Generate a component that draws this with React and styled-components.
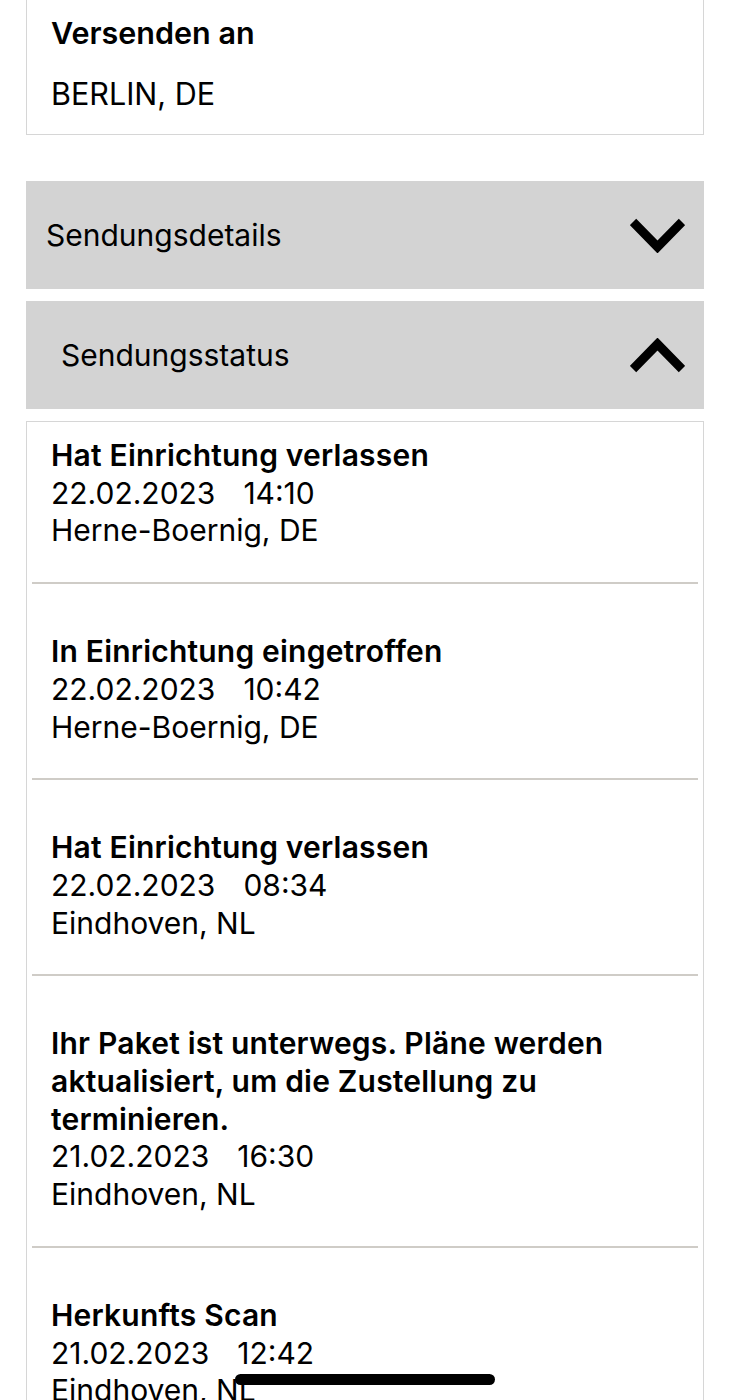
import styled, { createGlobalStyle } from "styled-components"

const GlobalStyle = createGlobalStyle`
  html, body {
    margin: 0;
    padding: 0;
    background: #ffffff;
  }
  body {
    font-family: Inter, "Noto Sans", "Liberation Sans", sans-serif;
    color: #000000;
    -webkit-font-smoothing: antialiased;
  }
`

const Page = styled.div`
  padding: 0 26px;
  display: flex;
  flex-direction: column;
  position: relative;
  min-height: 1400px;
  box-sizing: border-box;
  overflow: hidden;
`

const AddressCard = styled.div`
  margin-top: -10px;
  border: 1px solid #d6d6d6;
  border-top: none;
  padding: 0 24px 21px 24px;
`

const AddressTitle = styled.div`
  font-size: 30.5px;
  font-weight: 600;
  line-height: 38px;
  padding-top: 24px;
`

const AddressText = styled.div`
  font-size: 30.5px;
  line-height: 38px;
  margin-top: 23px;
`

const Header = styled.div`
  height: 108px;
  background: #d3d3d3;
  display: flex;
  align-items: center;
  justify-content: space-between;
  padding: 0 19px 0 ${(p) => p.$indent}px;
  margin-top: ${(p) => p.$gap}px;
  font-size: 30px;
  box-sizing: border-box;
`

const Chevron = styled.svg`
  width: 55px;
  height: 35px;
  display: block;
`

const StatusList = styled.div`
  margin-top: 12px;
  border: 1px solid #d6d6d6;
  border-bottom: none;
  padding: 0 5px;
`

const Event = styled.div`
  padding: ${(p) => (p.$first ? 15 : 49)}px 60px 32px 19px;
  border-bottom: 2px solid #cfccc7;
`

const EventTitle = styled.div`
  font-size: 30px;
  font-weight: 600;
  letter-spacing: 0.2px;
  line-height: 37.7px;
`

const EventLine = styled.div`
  font-size: 30px;
  line-height: 37.7px;
  display: flex;
  gap: 28px;
`

const HomeBar = styled.div`
  position: absolute;
  left: 235px;
  top: 1374px;
  width: 260px;
  height: 11px;
  border-radius: 6px;
  background: #000000;
`

const ChevronIcon = ({ up }) => (
  <Chevron viewBox="0 0 55 35">
    <polyline
      points={up ? "3,31 27.5,6 52,31" : "3,4 27.5,29 52,4"}
      fill="none"
      stroke="#000"
      strokeWidth="9"
      strokeLinejoin="miter"
    />
  </Chevron>
)

const events = [
  { title: "Hat Einrichtung verlassen", date: "22.02.2023", time: "14:10", place: "Herne-Boernig, DE" },
  { title: "In Einrichtung eingetroffen", date: "22.02.2023", time: "10:42", place: "Herne-Boernig, DE" },
  { title: "Hat Einrichtung verlassen", date: "22.02.2023", time: "08:34", place: "Eindhoven, NL" },
  {
    title: "Ihr Paket ist unterwegs. Pläne werden aktualisiert, um die Zustellung zu terminieren.",
    date: "21.02.2023",
    time: "16:30",
    place: "Eindhoven, NL",
  },
  { title: "Herkunfts Scan", date: "21.02.2023", time: "12:42", place: "Eindhoven, NL" },
]

export default function App() {
  return (
    <>
      <GlobalStyle />
      <Page>
        <AddressCard>
          <AddressTitle>Versenden an</AddressTitle>
          <AddressText>BERLIN, DE</AddressText>
        </AddressCard>

        <Header $indent={20} $gap={46}>
          <span>Sendungsdetails</span>
          <ChevronIcon />
        </Header>
        <Header $indent={35} $gap={12}>
          <span>Sendungsstatus</span>
          <ChevronIcon up />
        </Header>

        <StatusList>
          {events.map((e, i) => (
            <Event key={i} $first={i === 0}>
              <EventTitle>{e.title}</EventTitle>
              <EventLine>
                <span>{e.date}</span>
                <span>{e.time}</span>
              </EventLine>
              <EventLine>{e.place}</EventLine>
            </Event>
          ))}
        </StatusList>
        <HomeBar />
      </Page>
    </>
  )
}
